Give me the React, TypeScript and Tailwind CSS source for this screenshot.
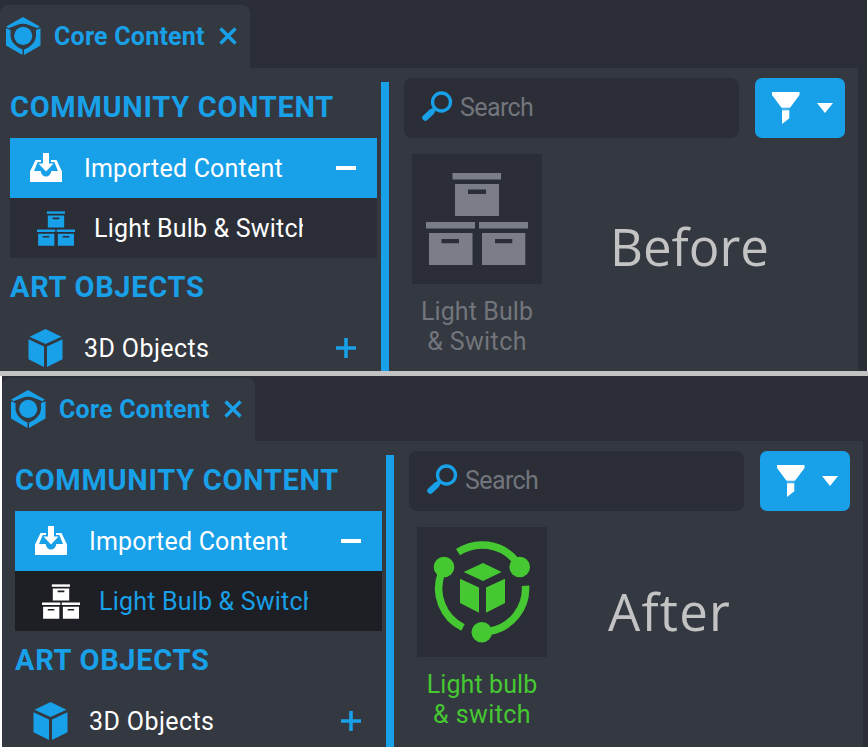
import React from "react";

type IconProps = { className?: string };

function CoreLogo() {
  return (
    <svg className="-mt-[2px] h-[38px] w-[36px] shrink-0" viewBox="0 0 36 38" fill="#18a0e8">
      <path d="M18 0 34.7 9.6 32.5 11.2 24 7.900C20 6.3 16 6.3 12 7.900L3.3 11.2 1.2 9.6Z" />
      <path d="M1 11.2 5.500 13V18c0 6 4 11.300 12 14.600V38L1 28.400Z" />
      <path d="M35.500 11.200 31 13V18c0 6-4 11.300-12 14.600V38L35.500 28.400Z" />
      <circle cx="18.200" cy="18.900" r="9.100" />
    </svg>
  );
}

function ImportIcon() {
  return (
    <svg className="-mt-[2px] h-[29px] w-[32px] shrink-0" viewBox="0 0 32 29" fill="#fff">
      <path d="M13 0h6v10.500h4.500L16 18.500 8.500 10.500h4.500Z" />
      <path d="M5.500 7H11v2H7.700L4 18h6.700c.8 4 2.800 5.500 5.300 5.500s4.500-1.500 5.300-5.500H28L24.300 9H21V7h5.500L32 18.500V29H0V18.500Z" />
    </svg>
  );
}

function BoxesIcon({ className }: IconProps) {
  return (
    <svg className={className} viewBox="0 0 102 92" fill="currentColor">
      <path d="M26.500 0h48.500v6.500H26.500Z" />
      <path fillRule="evenodd" d="M29 11h44v32H29Zm13 5.500v4.500h18v-4.500Z" />
      <path d="M0 49h49v6.500H0ZM53 49h49v6.500H53Z" />
      <path fillRule="evenodd" d="M3 60h43.500v32.300H3Zm12.500 6v4.300h17.500v-4.300Z" />
      <path fillRule="evenodd" d="M56 60h43.300v32.300H56Zm13 6v4.300h17.300v-4.300Z" />
    </svg>
  );
}

function CubeIcon() {
  return (
    <svg className="h-[38px] w-[35px] shrink-0" viewBox="0 0 35 38" fill="#18a0e8">
      <path d="M17.500 0 33.500 7.800 17.500 15 1.500 7.800Z" />
      <path d="M.500 10.200 16 17.500V38L.500 30.200Z" />
      <path d="M34.500 10.200 19 17.500V38l15.500-7.800Z" />
    </svg>
  );
}

function NetworkCubeIcon() {
  return (
    <svg className="h-[130px] w-[130px]" viewBox="0 0 130 130" fill="#46c832">
      <g fill="none" stroke="#46c832" strokeWidth="7.500">
        <path d="M41 25.200A43.500 43.500 0 0 1 98 33" />
        <path d="M108.500 58.700A43.500 43.500 0 0 1 73 104.200" />
        <path d="M24.500 46A43.500 43.500 0 0 0 46 100.500" />
      </g>
      <circle cx="27" cy="40" r="10.300" />
      <circle cx="102.700" cy="40" r="10.300" />
      <circle cx="64.800" cy="105.300" r="10.300" />
      <path d="M66 36 84.700 45 66 54 46.700 45Z" />
      <path d="M43 51.700 62 60.500V85.700L43 76Z" />
      <path d="M88 51.700 69 60.500V85.700L88 76Z" />
    </svg>
  );
}

function SearchIcon() {
  return (
    <svg className="-mt-[3px] h-[31px] w-[31px] shrink-0" viewBox="0 0 31 31" fill="none" stroke="#18a0e8">
      <circle cx="19.500" cy="11" r="9" strokeWidth="3.300" />
      <path d="M13 17.500 10 20.500" strokeWidth="4" />
      <path d="M9.500 21 3.300 26.800" strokeWidth="6" strokeLinecap="round" />
    </svg>
  );
}

function FunnelIcon() {
  return (
    <svg className="h-[32px] w-[28px] shrink-0" viewBox="0 0 28 32" fill="#fff">
      <path d="M0 0h27.500v3L18 15.700H9.500L0 3Z" />
      <path d="M10 18.300h7.300v8L10 32Z" />
      <path d="M10 16.500h7.300v1H10Z" fillOpacity="0.4" />
    </svg>
  );
}

function Heading({ children }: { children: string }) {
  return (
    <div className="flex h-[60px] items-center pl-[10px] text-[29px] font-bold tracking-[0.7px] text-[#18a0e8]">
      {children}
    </div>
  );
}

function Panel({ after = false }: { after?: boolean }) {
  return (
    <div className={after ? "-mt-[3px] ml-[3px] w-[863px]" : "w-[867px]"}>
      <div className="flex h-[68px] items-end">
        <div className={`flex h-[63px] items-center rounded-t-[8px] bg-[#343840] ${after ? "-ml-[3px] w-[253px] pl-[8px]" : "w-[250px] pl-[5px]"}`}>
          <CoreLogo />
          <span className="ml-[13px] w-[152px] text-[25px] font-bold tracking-[0.23px]">Core Content</span>
          <svg className="-mt-[1px] ml-[13px] h-[18px] w-[18px]" viewBox="0 0 18 18" stroke="#18a0e8" strokeWidth="3.400">
            <path d="M1.500 1.500 16.500 16.500M16.500 1.500 1.500 16.500" />
          </svg>
        </div>
      </div>
      <div className={`flex h-[310px] bg-[#343840] ${after ? "-ml-[3px] w-[861px] pl-[3px]" : "w-[858px]"}`}>
        <div className="w-[381px] pt-[10px]">
          <Heading>COMMUNITY CONTENT</Heading>
          <div className="ml-[10px] flex h-[60px] w-[367px] items-center bg-[#18a0e8] pl-[20px] text-[25px] text-white">
            <ImportIcon />
            <span className="ml-[22px] w-[252px] pt-[2px] tracking-[0.2px]">Imported Content</span>
            <i className="h-[4px] w-[20px] bg-white" />
          </div>
          <div
            className={`ml-[10px] flex h-[60px] w-[367px] items-center pl-[27px] text-[25px] ${after ? "bg-[#1e1f24] text-[#18a0e8]" : "bg-[#2b2e36] text-white"}`}
          >
            <BoxesIcon className={`h-[35px] w-[38px] shrink-0 ${after ? "text-white" : "text-[#18a0e8]"}`} />
            <span className="ml-[19px] w-[209px] overflow-hidden pt-[2px] tracking-[0.2px] whitespace-nowrap">Light Bulb &amp; Switch</span>
          </div>
          <Heading>ART OBJECTS</Heading>
          <div className="ml-[10px] flex h-[60px] items-center pl-[18px] text-[25px] text-white">
            <CubeIcon />
            <span className="ml-[21px] w-[252px] pt-[2px] tracking-[0.4px]">3D Objects</span>
            <svg className="h-[20px] w-[20px]" viewBox="0 0 20 20" stroke="#18a0e8" strokeWidth="3.600">
              <path d="M0 10h20M10 0v20" />
            </svg>
          </div>
        </div>
        <div className="mt-[14px] w-[8px] bg-[#18a0e8]" />
        <div className="ml-[15px] pt-[10px]">
          <div className="flex gap-[16px]">
            <div className="flex h-[60px] w-[335px] items-center rounded-[8px] bg-[#2b2e36] pl-[18px] text-[25px] text-[#72757c]">
              <SearchIcon />
              <span className="ml-[7px] tracking-[-0.6px]">Search</span>
            </div>
            <div className="flex h-[60px] w-[90px] items-center rounded-[7px] bg-[#18a0e8] pl-[17px]">
              <FunnelIcon />
              <svg className="ml-[17px] h-[10px] w-[16px]" viewBox="0 0 16 10" fill="#fff">
                <path d="M0 0h16L8 10Z" />
              </svg>
            </div>
          </div>
          <div className="mt-[16px] flex">
            <div className="ml-[8px] w-[130px]">
              <div className="flex h-[130px] items-center justify-center bg-[#2b2e36]">
                {after ? <NetworkCubeIcon /> : <BoxesIcon className="h-[92px] w-[102px] text-[#7b7e87]" />}
              </div>
              <div className={`mt-[13px] text-center text-[25px] leading-[30px] ${after ? "text-[#46c832]" : "text-[#72757c]"}`}>
                <div className="tracking-[0.1px]">{after ? "Light bulb" : "Light Bulb"}</div>
                <div className="tracking-[0.4px]">{after ? "& switch" : "& Switch"}</div>
              </div>
            </div>
            <div className={`font-['Open_Sans','Noto_Sans',sans-serif] text-[51px] leading-[60px] text-[#c3c3c3] ${after ? "ml-[61px] mt-[54px] tracking-[1.2px]" : "ml-[68px] mt-[62px]"}`}>
              {after ? "After" : "Before"}
            </div>
          </div>
        </div>
      </div>
    </div>
  );
}

export default function App() {
  return (
    <div className="h-[747px] w-[868px] overflow-hidden bg-white font-[Roboto,sans-serif] text-[#18a0e8]">
      <div className="h-[371px] w-[867px] overflow-hidden bg-[#2b2e36]">
        <Panel />
      </div>
      <div className="h-[5px] bg-[#c3c3c3]" />
      <div className="ml-[2px] flow-root h-[371px] overflow-hidden bg-[#2b2e36]">
        <Panel after />
      </div>
    </div>
  );
}
